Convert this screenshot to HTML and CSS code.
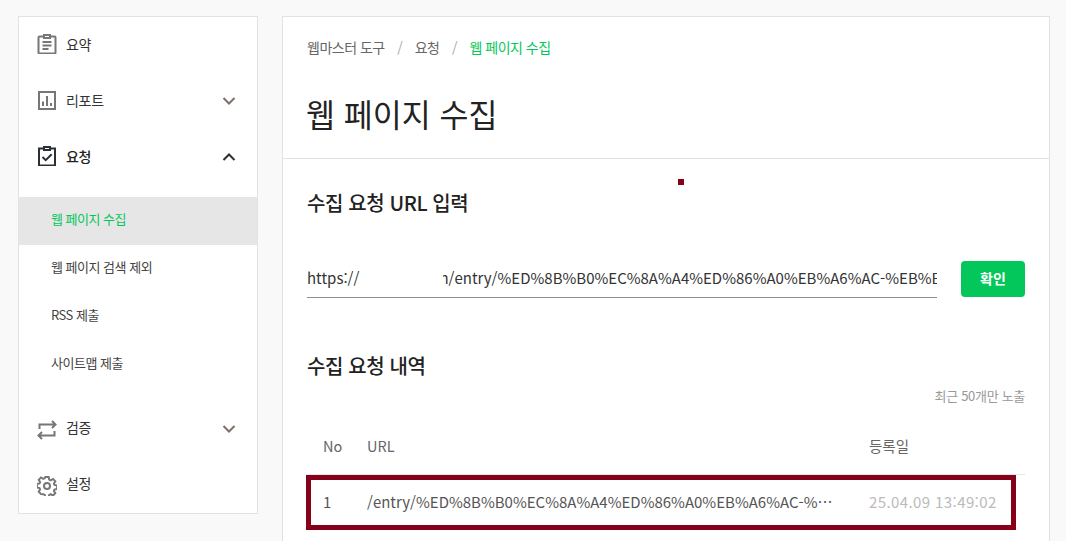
FILE: index.html
```html
<!DOCTYPE html>
<html lang="ko">
<head>
<meta charset="utf-8">
<title>웹 페이지 수집</title>
<link rel="stylesheet" href="styles.css">
</head>
<body>
<div class="page">
  <nav class="side">
    <a class="item"><svg class="ico" viewBox="0 0 20 20"><path d="M7 2.500H2.500a1 1 0 0 0-1 1v15a1 1 0 0 0 1 1h15a1 1 0 0 0 1-1v-15a1 1 0 0 0-1-1H13M7 1h6v3H7zM5.500 8h9M5.500 11.500h9M5.500 15h6"/></svg><span>요약</span></a>
    <a class="item"><svg class="ico" viewBox="0 0 20 20"><path d="M2 2h16v17H2zM6 16v-4.500M10 16V6M14 16v-3"/></svg><span>리포트</span><svg class="chev" viewBox="0 0 14 10"><path d="M1.500 2l5.500 5.500L12.500 2"/></svg></a>
    <a class="item open"><svg class="ico" viewBox="0 0 20 20"><path d="M7 2.500H2v17h16v-17h-5M7 1h6v3H7zM5.500 11l3.200 3.200 6-6"/></svg><span>요청</span><svg class="chev" viewBox="0 0 14 10"><path d="M1.500 8L7 2.500 12.500 8"/></svg></a>
    <div class="sub">
      <a class="subitem active">웹 페이지 수집</a>
      <a class="subitem">웹 페이지 검색 제외</a>
      <a class="subitem">RSS 제출</a>
      <a class="subitem">사이트맵 제출</a>
    </div>
    <a class="item low"><svg class="ico" viewBox="0 0 20 20"><path d="M2.500 9V4.500H18M15 1l3.500 3.500L15 8M17.500 11v4.500H2M5 12l-3.500 3.500L5 19"/></svg><span>검증</span><svg class="chev" viewBox="0 0 14 10"><path d="M1.500 2l5.500 5.500L12.500 2"/></svg></a>
    <a class="item low"><svg class="ico gear" viewBox="0 0 20 20"><circle cx="10" cy="10" r="3"/><path d="M8.300 1h3.400l.5 2.600 1.500.7 2.300-1.400 2.300 2.400-1.400 2.200.6 1.500 2.600.6v3.300l-2.600.6-.6 1.500 1.400 2.200-2.300 2.400-2.300-1.400-1.500.7-.5 2.500H8.300l-.5-2.500-1.500-.7L4 18.100l-2.300-2.400 1.400-2.200-.6-1.500-2.600-.6V8.100l2.600-.6.6-1.500-1.400-2.200L4 1.400l2.300 1.400 1.500-.7z"/></svg><span>설정</span></a>
  </nav>
  <main class="main">
    <header class="head">
      <ol class="crumbs">
        <li>웹마스터 도구</li>
        <li class="sep">/</li>
        <li>요청</li>
        <li class="sep">/</li>
        <li class="cur">웹 페이지 수집</li>
      </ol>
      <h1>웹 페이지 수집</h1>
    </header>
    <section class="body">
      <h2>수집 요청 URL 입력</h2>
      <div class="form">
        <div class="field">https://<span class="gap"></span>n/entry/%ED%8B%B0%EC%8A%A4%ED%86%A0%EB%A6%AC-%EB%B8%94%EB%A1%9C%EA%B7%B8<span class="mask"></span></div>
        <button class="ok">확인</button>
      </div>
      <h2 class="second">수집 요청 내역</h2>
      <p class="note">최근 50개만 노출</p>
      <div class="table">
        <div class="row th"><span>No</span><span>URL</span><span>등록일</span></div>
        <div class="row td"><span>1</span><span class="url">/entry/%ED%8B%B0%EC%8A%A4%ED%86%A0%EB%A6%AC-%EB%B8%94%EB%A1%9C%EA%B7%B8</span><span class="date">25.04.09 13:49:02</span></div>
        <div class="mark"></div>
      </div>
    </section>
    <i class="dot"></i>
  </main>
</div>
</body>
</html>
```
FILE: styles.css
```css
* { box-sizing: border-box; }
html, body { margin: 0; height: 100%; overflow: hidden; }
body { background: #f9f9f9; font-family: "Noto Sans CJK KR", "Noto Sans", sans-serif; color: #222; }
.page { display: flex; align-items: flex-start; gap: 24px; padding: 16px 16px 0 18px; }
.side { width: 240px; flex: none; height: 498px; background: #fff; border: 1px solid #e2e2e2; }
.item { display: flex; align-items: center; height: 56px; padding: 0 21px 2px 18px; font-size: 14px; color: #333; letter-spacing: -.3px; }
.item span { margin-left: 9px; flex: 1; }
.ico { width: 20px; height: 20px; fill: none; stroke: #777; stroke-width: 2; flex: none; }
.low .ico { margin-top: 5px; }
.chev { width: 14px; height: 10px; margin-top: 2px; fill: none; stroke: #7d6f6b; stroke-width: 2; flex: none; }
.low .chev { margin-top: 4px; }
.open { color: #222; font-weight: 500; }
.open .ico, .open .chev { stroke: #2b2f36; }
.sub { padding: 12px 0 11px; }
.subitem { display: flex; align-items: center; height: 48px; padding: 0 0 5px 32px; font-size: 13px; letter-spacing: -.5px; color: #444; }
.active { background: #e6e6e6; color: #03c75a; }
.main { position: relative; flex: none; width: 768px; height: 560px; background: #fff; border: 1px solid #e2e2e2; }
.head { height: 142px; padding: 18px 24px 0; border-bottom: 1px solid #e2e2e2; }
.crumbs { display: flex; gap: 12.500px; margin: 0; padding: 0; list-style: none; font-size: 14px; letter-spacing: -.5px; color: #666; line-height: 24px; }
.sep { color: #aaa; }
.cur { color: #03c75a; }
h1 { margin: 31px 0 0 -1px; font-size: 31.500px; font-weight: 400; line-height: 46px; color: #222; letter-spacing: 0; }
.body { padding: 29px 24px 0; }
h2 { margin: 0; font-size: 20px; font-weight: 500; line-height: 29px; color: #222; letter-spacing: -.4px; }
.form { display: flex; justify-content: space-between; align-items: flex-end; margin-top: 44px; }
.field { position: relative; width: 630px; height: 36px; margin-bottom: -1px; line-height: 32px; font-size: 15px; color: #333; border-bottom: 1px solid #8e8e8e; white-space: nowrap; overflow: hidden; }
.gap { display: inline-block; width: 80px; }
.mask { position: absolute; left: 53px; top: 0; width: 83px; height: 34px; background: #fff; }
.ok { width: 64px; height: 36px; padding: 0 0 3px; border: 0; border-radius: 4px; background: #03c75a; color: #fff; font: 700 14px "Noto Sans CJK KR", sans-serif; }
.second { margin-top: 54px; }
.note { margin: 6px 0 0; text-align: right; font-size: 13px; letter-spacing: -.3px; line-height: 19px; color: #999; }
.table { position: relative; margin: 17px 0 0 -1px; width: 719px; }
.row { display: grid; grid-template-columns: 44px 502px 1fr; align-items: center; padding-left: 17px; }
.th { height: 53px; padding-bottom: 5px; font-size: 14.500px; color: #666; border-bottom: 1px solid #e6e6e6; }
.td { height: 54px; padding-bottom: 2px; font-size: 15px; color: #555; }
.url { max-width: 468px; overflow: hidden; text-overflow: ellipsis; white-space: nowrap; }
.date { color: #bbb; letter-spacing: .4px; white-space: nowrap; }
.mark { position: absolute; left: 0; top: 53px; width: 710px; height: 55px; border: 5px solid #850018; }
.dot { position: absolute; left: 395px; top: 162px; width: 6px; height: 6px; background: #850018; }
```
